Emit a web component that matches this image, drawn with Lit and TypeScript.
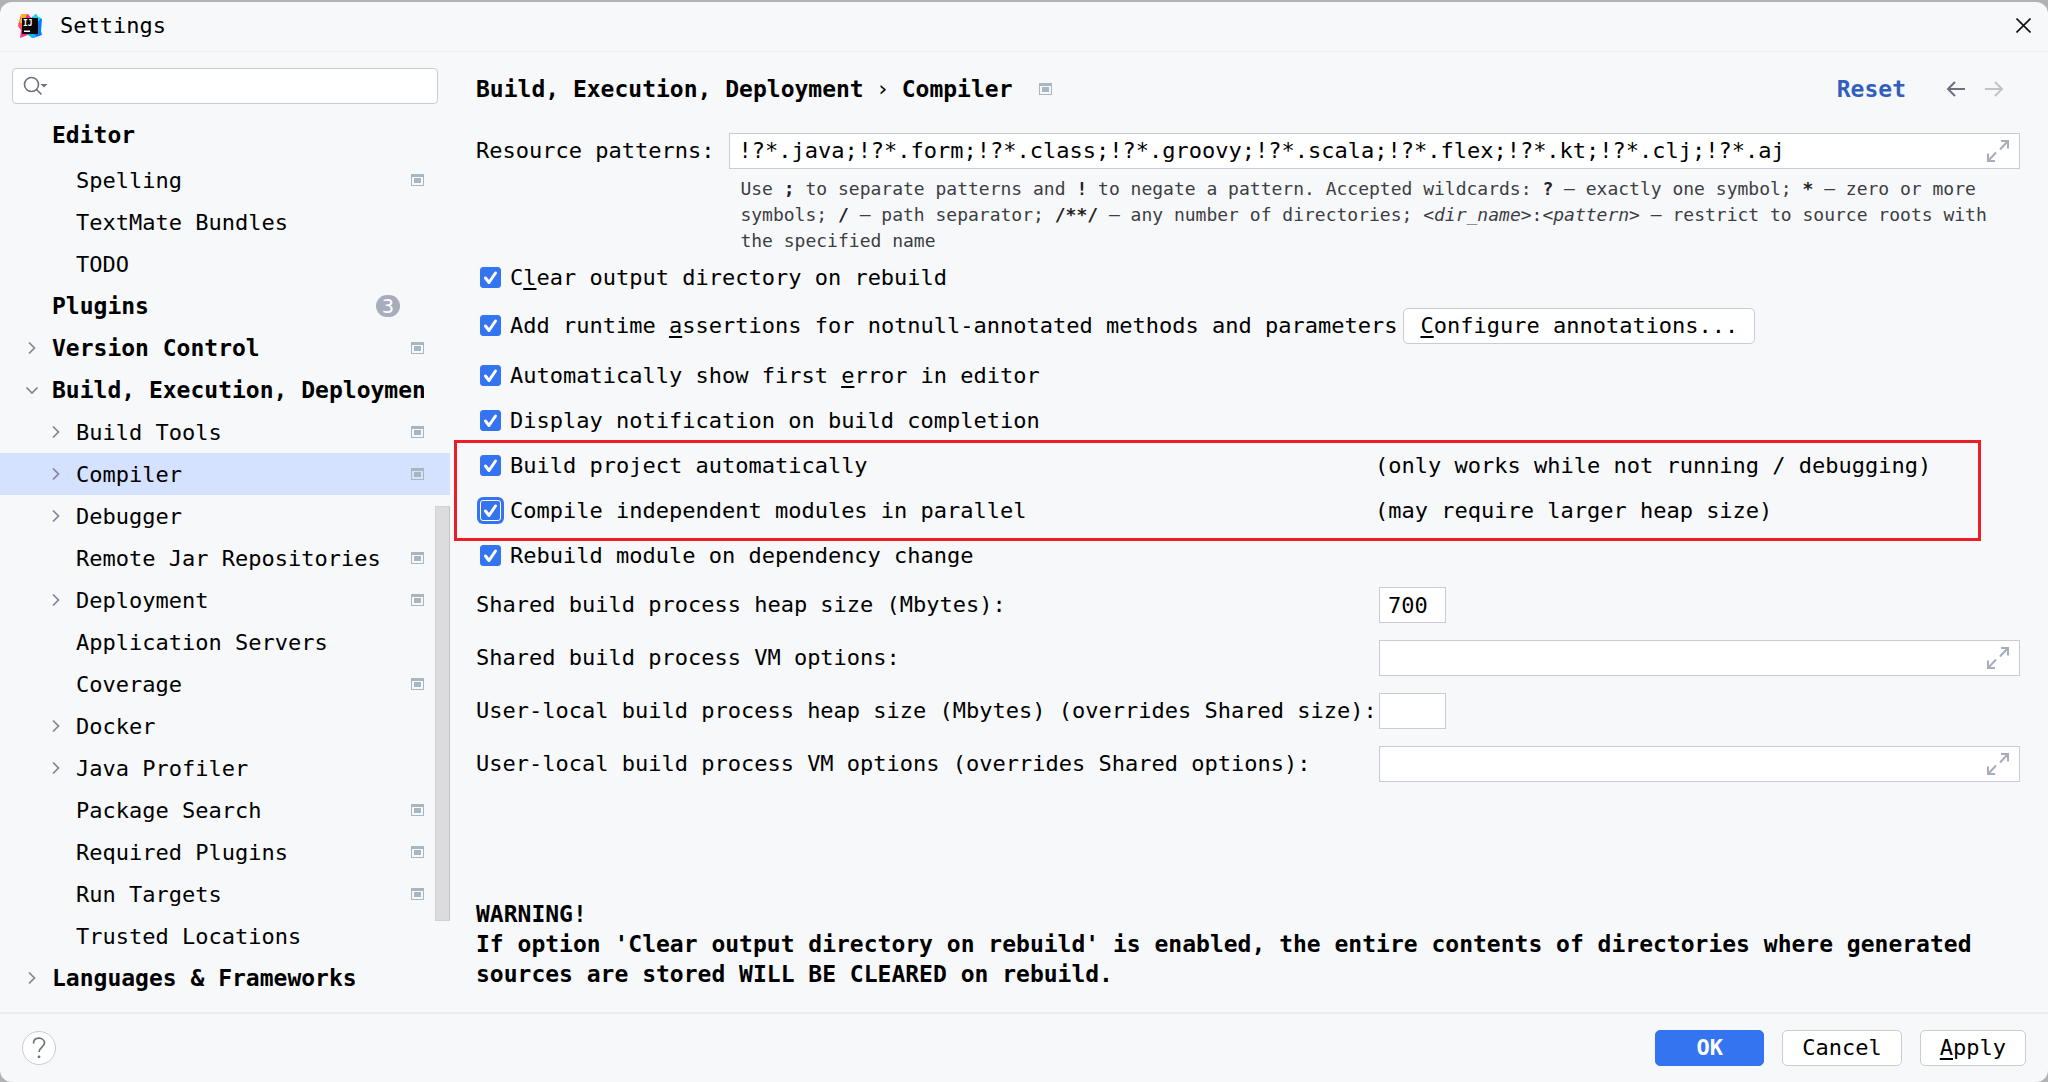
import { LitElement, html, css, svg, nothing } from "lit";
import { customElement, property } from "lit/decorators.js";
import { classMap } from "lit/directives/class-map.js";

interface TreeNode {
  label: string;
  level: 0 | 1;
  arrow?: "right" | "down";
  project?: boolean;
  badge?: number;
  selected?: boolean;
  header?: boolean;
}

const TREE: TreeNode[] = [
  { label: "Editor", level: 0, header: true },
  { label: "Spelling", level: 1, project: true },
  { label: "TextMate Bundles", level: 1 },
  { label: "TODO", level: 1 },
  { label: "Plugins", level: 0, badge: 3 },
  { label: "Version Control", level: 0, arrow: "right", project: true },
  { label: "Build, Execution, Deployment", level: 0, arrow: "down" },
  { label: "Build Tools", level: 1, arrow: "right", project: true },
  { label: "Compiler", level: 1, arrow: "right", project: true, selected: true },
  { label: "Debugger", level: 1, arrow: "right" },
  { label: "Remote Jar Repositories", level: 1, project: true },
  { label: "Deployment", level: 1, arrow: "right", project: true },
  { label: "Application Servers", level: 1 },
  { label: "Coverage", level: 1, project: true },
  { label: "Docker", level: 1, arrow: "right" },
  { label: "Java Profiler", level: 1, arrow: "right" },
  { label: "Package Search", level: 1, project: true },
  { label: "Required Plugins", level: 1, project: true },
  { label: "Run Targets", level: 1, project: true },
  { label: "Trusted Locations", level: 1 },
  { label: "Languages & Frameworks", level: 0, arrow: "right" },
];

const projectIcon = () => html`<svg class="project" width="13" height="12" viewBox="0 0 13 12" aria-hidden="true">
  <path fill="#a9b6bf" fill-rule="evenodd" d="M0 0h13v12H0zM1 3v8h11V3z" />
  <path fill="#a9b6bf" d="M3 4h7v5H3z" />
</svg>`;

const chevron = (dir?: "right" | "down") => html`<svg class="chevron" width="12" height="14" viewBox="0 0 12 14" aria-hidden="true">
  ${dir === "right" ? svg`<path d="M1 1.5 6.5 7 1 12.5" />` : nothing}
  ${dir === "down" ? svg`<path d="M-1.500 4.500 4 10l5.500-5.500" />` : nothing}
</svg>`;

const sharedStyles = css`
  *,
  *::before,
  *::after {
    box-sizing: border-box;
  }
  button,
  input {
    font: inherit;
    color: inherit;
    margin: 0;
  }
  u {
    text-decoration: underline;
    text-decoration-thickness: 2px;
    text-underline-offset: 3px;
    text-decoration-skip-ink: none;
  }
  svg {
    display: block;
    flex: none;
  }
`;

@customElement("settings-tree")
export class SettingsTree extends LitElement {
  static styles = [
    sharedStyles,
    css`
      :host {
        display: block;
        position: relative;
        width: 450px;
        flex: none;
        padding: 16px 0 13px;
      }
      .search {
        display: flex;
        align-items: center;
        gap: 4px;
        height: 36px;
        margin: 0 12px;
        padding: 0 10px;
        background: #fff;
        border: 1px solid #c9ccd6;
        border-radius: 4px;
      }
      .search input {
        flex: 1;
        min-width: 0;
        border: 0;
        outline: 0;
        background: none;
      }
      ul {
        list-style: none;
        margin: 7px 0 0;
        padding: 0;
      }
      .row {
        display: flex;
        align-items: center;
        height: 42px;
        padding: 0 26px 0 28px;
        color: #000;
        text-decoration: none;
      }
      .row.child {
        padding-left: 52px;
      }
      .row.top {
        font-size: 23px;
        font-weight: 700;
      }
      .row.header {
        height: 48px;
      }
      .row.selected {
        background: #d4e1ff;
      }
      .chevron {
        margin-right: 12px;
        fill: none;
        stroke: #818594;
        stroke-width: 1.7;
        overflow: visible;
      }
      .label {
        flex: 1;
        min-width: 0;
        overflow: hidden;
        white-space: nowrap;
      }
      .child .label {
        padding-top: 2px;
      }
      .badge {
        width: 24px;
        height: 22px;
        margin-right: 24px;
        border-radius: 11px;
        background: #a8adbd;
        color: #fff;
        font-size: 20px;
        font-weight: 400;
        line-height: 22px;
        text-align: center;
      }
      .thumb {
        position: absolute;
        top: 454px;
        bottom: 91px;
        right: 0;
        width: 15px;
        background: #dcdcde;
        border: 1px solid #d2d2d4;
        border-right-color: #c4c4c7;
      }
    `,
  ];

  render() {
    return html`
      <div class="search">
        <svg width="26" height="22" viewBox="0 0 26 22" aria-hidden="true">
          <g fill="none" stroke="#6c707e" stroke-width="1.6">
            <circle cx="8.5" cy="9.5" r="7" />
            <path d="m13.5 14.5 5 5" />
          </g>
          <path fill="#6c707e" d="M17.5 9h7l-3.5 3.6z" />
        </svg>
        <input type="text" aria-label="Search settings" />
      </div>
      <nav aria-label="Settings categories">
        <ul>
          ${TREE.map(
            (n) => html`<li>
              <a
                href="#"
                class=${classMap({
                  row: true,
                  top: n.level === 0,
                  child: n.level === 1,
                  header: !!n.header,
                  selected: !!n.selected,
                })}
              >
                ${chevron(n.arrow)}
                <span class="label">${n.label}</span>
                ${n.badge ? html`<span class="badge">${n.badge}</span>` : nothing}
                ${n.project ? projectIcon() : nothing}
              </a>
            </li>`
          )}
        </ul>
      </nav>
      <div class="thumb"></div>
    `;
  }
}

@customElement("check-option")
export class CheckOption extends LitElement {
  @property({ type: Boolean }) focused = false;

  static styles = [
    sharedStyles,
    css`
      :host {
        display: block;
      }
      label {
        display: flex;
        align-items: center;
        gap: 9px;
        padding-left: 4px;
        white-space: nowrap;
      }
      .box {
        display: grid;
        flex: none;
      }
      .box > * {
        grid-area: 1 / 1;
      }
      input {
        appearance: none;
        width: 21px;
        height: 21px;
        border-radius: 3px;
        background: #fff;
        border: 1px solid #c9ccd6;
        outline: 0;
      }
      input:checked {
        background: #3574f0;
        border-color: #3574f0;
      }
      .focused input {
        border-color: #fff;
        box-shadow: 0 0 0 3px #3574f0;
      }
      svg {
        fill: none;
        stroke: #fff;
        stroke-width: 3;
        stroke-linecap: round;
        stroke-linejoin: round;
        pointer-events: none;
      }
    `,
  ];

  render() {
    return html`<label>
      <span class=${classMap({ box: true, focused: this.focused })}>
        <input type="checkbox" checked />
        <svg width="21" height="21" viewBox="0 0 21 21" aria-hidden="true"><path d="m5.5 11 3.5 4.5L15.5 6" /></svg>
      </span>
      <span><slot></slot></span>
    </label>`;
  }
}

@customElement("expand-field")
export class ExpandField extends LitElement {
  @property() value = "";
  @property() name = "";

  static styles = [
    sharedStyles,
    css`
      :host {
        display: block;
        min-width: 0;
      }
      .field {
        display: flex;
        align-items: center;
        height: 36px;
        padding: 0 9px 0 8px;
        background: #fff;
        border: 1px solid #c9ccd6;
      }
      input {
        flex: 1;
        min-width: 0;
        padding: 0;
        border: 0;
        outline: 0;
        background: none;
      }
      button {
        padding: 0;
        border: 0;
        background: none;
      }
      svg {
        fill: none;
        stroke: #a8adbd;
        stroke-width: 2;
      }
    `,
  ];

  render() {
    return html`<div class="field">
      <input type="text" aria-label=${this.name} .value=${this.value} />
      <button type="button" aria-label="Expand">
        <svg width="24" height="24" viewBox="0 0 24 24" aria-hidden="true">
          <path d="M15 2h7v7.500M22 2l-8 8.500M2 14.500V22h7M2 22l8-8.500" />
        </svg>
      </button>
    </div>`;
  }
}

@customElement("app-root")
export class AppRoot extends LitElement {
  static styles = [
    sharedStyles,
    css`
      :host {
        display: block;
        min-height: 100vh;
        padding-top: 2px;
        background: #b1b2b3;
        color: #000;
        font: 22px/30px "DejaVu Sans Mono", "Liberation Mono", monospace;
      }
      .window {
        display: flex;
        flex-direction: column;
        min-height: calc(100vh - 2px);
        background: #f7f8fa;
        border-radius: 12px;
      }
      .titlebar {
        display: flex;
        align-items: center;
        height: 50px;
        padding: 0 17px 2px 18px;
        border-bottom: 1px solid #ebecf0;
      }
      .titlebar h1 {
        flex: 1;
        margin: 0 0 0 18px;
        font-size: 22px;
        font-weight: 400;
      }
      .icon-button {
        display: block;
        padding: 0;
        border: 0;
        background: none;
      }
      .logo-text {
        fill: #fff;
        font-size: 8px;
        font-weight: 700;
      }
      .body {
        display: flex;
        flex: 1;
      }
      main {
        display: flex;
        flex: 1;
        flex-direction: column;
        min-width: 0;
        padding: 22px 28px 23px 26px;
      }
      .heading {
        display: flex;
        align-items: center;
        height: 30px;
        padding-right: 16px;
      }
      .crumbs {
        display: flex;
        align-items: center;
        margin: 0;
        font-size: 23px;
        font-weight: 700;
      }
      .sep {
        width: 38px;
        font-size: 22px;
        font-weight: 400;
        text-align: center;
      }
      .heading .project {
        margin-left: 26px;
      }
      .reset {
        margin-left: auto;
        color: #315fbd;
        font-size: 23px;
        font-weight: 700;
        text-decoration: none;
      }
      .arrows {
        display: flex;
        gap: 18px;
        margin-left: 40px;
      }
      .arrows svg {
        fill: none;
        stroke: #6c707e;
        stroke-width: 2;
      }
      .arrows :disabled svg {
        stroke: #c2c3c8;
      }
      .patterns {
        display: grid;
        grid-template-columns: auto minmax(0, 1fr);
        column-gap: 15px;
        align-items: center;
        margin-top: 29px;
      }
      .help {
        grid-column: 2;
        margin: 7px 0 0;
        padding-left: 11px;
        color: #3c3e43;
        font-size: 18px;
        line-height: 26px;
      }
      .help b {
        color: #222;
      }
      .option {
        display: flex;
        align-items: center;
        gap: 6px;
        height: 45px;
      }
      .option.first {
        height: 41px;
        margin-top: 3px;
      }
      .option.tall {
        height: 55px;
      }
      .noted {
        display: grid;
        grid-template-columns: minmax(0, 899fr) minmax(0, 645fr);
        gap: 0;
      }
      .marked {
        position: relative;
      }
      .marked::after {
        content: "";
        position: absolute;
        top: -3px;
        bottom: -8px;
        left: -22px;
        right: 39px;
        border: 3px solid #ee1c25;
        pointer-events: none;
      }
      .button {
        height: 36px;
        padding: 0 19px;
        background: #fff;
        border: 1px solid #c9ccd6;
        border-radius: 5px;
        white-space: nowrap;
      }
      .tall .button {
        padding: 0 16px;
      }
      .fields {
        display: grid;
        grid-template-columns: minmax(0, 903fr) minmax(0, 641fr);
        row-gap: 17px;
        align-items: center;
        margin-top: 9px;
      }
      .small {
        width: 67px;
        height: 36px;
        padding: 0 8px;
        background: #fff;
        border: 1px solid #c9ccd6;
        border-radius: 0;
      }
      .warning {
        margin: auto 0 0;
        font-size: 23px;
        font-weight: 700;
      }
      footer {
        display: flex;
        align-items: center;
        gap: 18px;
        height: 70px;
        padding: 0 22px;
        border-top: 2px solid #ebecf0;
      }
      .question {
        display: grid;
        place-items: center;
        width: 34px;
        height: 34px;
        margin-right: auto;
        padding: 0;
        background: #fff;
        border: 1px solid #c9ccd6;
        border-radius: 50%;
      }
      .primary {
        min-width: 109px;
        background: #3574f0;
        border-color: #3574f0;
        color: #fff;
        font-weight: 700;
      }
    `,
  ];

  render() {
    return html`
      <div class="window">
        <header class="titlebar">
          <svg width="24" height="24" viewBox="0 0 24 24" aria-hidden="true">
            <path fill="#ff318c" d="M3 1 10 0l4 5-4 16-8 3 1-8-3-4z" />
            <path fill="#fdb60d" d="M3 0h6L7 5l-3 5-4-3 3-2z" />
            <path fill="#ff5d3a" d="M0 9l5 1-1 5-3-2 1-2z" />
            <path fill="#087cfa" d="m13 4 5-4 2 3 4 2-1 12 1 4-9 3-6-4z" />
            <path fill="#21d7f0" d="m14 3 4-3 2 3 3 1-3 4z" />
            <path fill="#12b5f5" d="m9 20 7-1 2 4-4 1z" />
            <path fill="#0b0506" d="M4 4h16v16H4z" />
            <text class="logo-text" x="5" y="12">IJ</text>
            <path fill="#fff" d="M6 16.500h6v1.500H6z" />
          </svg>
          <h1>Settings</h1>
          <button class="icon-button" type="button" aria-label="Close">
            <svg width="15" height="15" viewBox="0 0 15 15"><path fill="none" stroke="#111" stroke-width="1.6" d="m.5.5 14 14m0-14-14 14" /></svg>
          </button>
        </header>

        <div class="body">
          <settings-tree></settings-tree>
          <main>
            <div class="heading">
              <h2 class="crumbs"><span>Build, Execution, Deployment</span><span class="sep">›</span><span>Compiler</span></h2>
              ${projectIcon()}
              <a class="reset" href="#">Reset</a>
              <div class="arrows">
                <button class="icon-button" type="button" aria-label="Back">
                  <svg width="20" height="16" viewBox="0 0 20 16"><path d="M19 8H2M9 1 2 8l7 7" /></svg>
                </button>
                <button class="icon-button" type="button" aria-label="Forward" disabled>
                  <svg width="20" height="16" viewBox="0 0 20 16"><path d="M1 8h17M11 1l7 7-7 7" /></svg>
                </button>
              </div>
            </div>

            <div class="patterns">
              <span>Resource patterns:</span>
              <expand-field
                name="Resource patterns"
                value="!?*.java;!?*.form;!?*.class;!?*.groovy;!?*.scala;!?*.flex;!?*.kt;!?*.clj;!?*.aj"
              ></expand-field>
              <p class="help">
                Use <b>;</b> to separate patterns and <b>!</b> to negate a pattern. Accepted wildcards: <b>?</b> — exactly
                one symbol; <b>*</b> — zero or more symbols; <b>/</b> — path separator; <b>/**/</b> — any number of
                directories; <i>&lt;dir_name&gt;</i>:<i>&lt;pattern&gt;</i> — restrict to source roots with the specified
                name
              </p>
            </div>

            <div class="option first"><check-option>C<u>l</u>ear output directory on rebuild</check-option></div>
            <div class="option tall">
              <check-option>Add runtime <u>a</u>ssertions for notnull-annotated methods and parameters</check-option>
              <button class="button" type="button"><u>C</u>onfigure annotations...</button>
            </div>
            <div class="option"><check-option>Automatically show first <u>e</u>rror in editor</check-option></div>
            <div class="option"><check-option>Display notification on build completion</check-option></div>
            <div class="marked">
              <div class="option noted">
                <check-option>Build project automatically</check-option>
                <span>(only works while not running / debugging)</span>
              </div>
              <div class="option noted">
                <check-option focused>Compile independent modules in parallel</check-option>
                <span>(may require larger heap size)</span>
              </div>
            </div>
            <div class="option"><check-option>Rebuild module on dependency change</check-option></div>

            <div class="fields">
              <label for="shared-heap">Shared build process heap size (Mbytes):</label>
              <input class="small" id="shared-heap" type="text" value="700" />
              <span>Shared build process VM options:</span>
              <expand-field name="Shared build process VM options"></expand-field>
              <label for="local-heap">User-local build process heap size (Mbytes) (overrides Shared size):</label>
              <input class="small" id="local-heap" type="text" />
              <span>User-local build process VM options (overrides Shared options):</span>
              <expand-field name="User-local build process VM options"></expand-field>
            </div>

            <p class="warning">
              WARNING!<br />If option 'Clear output directory on rebuild' is enabled, the entire contents of directories
              where generated sources are stored WILL BE CLEARED on rebuild.
            </p>
          </main>
        </div>

        <footer>
          <button class="question" type="button" aria-label="Help">
            <svg width="14" height="22" viewBox="0 0 14 22" aria-hidden="true">
              <path fill="none" stroke="#6c707e" stroke-width="1.7" d="M1.500 6.500C1.500 3 4 1.200 7 1.200s5.500 2 5.500 4.800c0 4-5.500 4.300-5.500 9" />
              <circle cx="7" cy="19.800" r="1.400" fill="#6c707e" />
            </svg>
          </button>
          <button class="button primary" type="button">OK</button>
          <button class="button" type="button">Cancel</button>
          <button class="button" type="button"><u>A</u>pply</button>
        </footer>
      </div>
    `;
  }
}
